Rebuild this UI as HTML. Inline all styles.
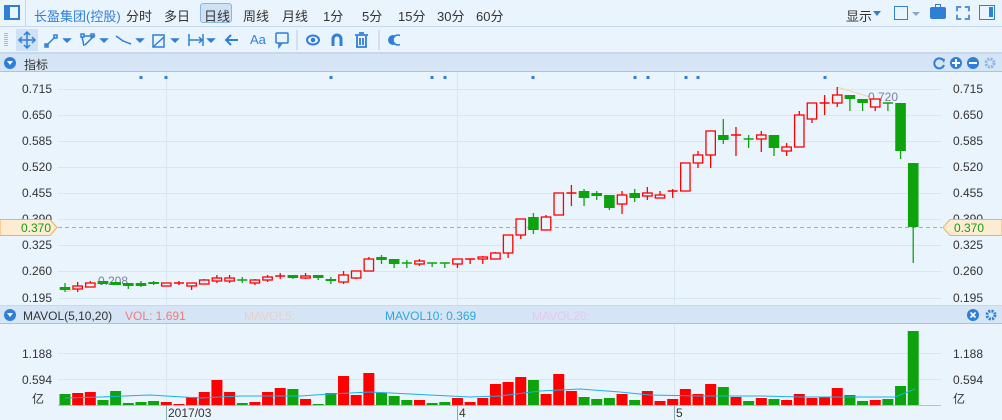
<!DOCTYPE html>
<html><head><meta charset="utf-8"><style>
*{margin:0;padding:0;box-sizing:border-box}
body{width:1002px;height:420px;overflow:hidden;background:#eaf4fd;font-family:"Liberation Sans","Noto Sans CJK SC",sans-serif;position:relative;color:#333}
.abs{position:absolute}
.top{left:0;top:0;width:1002px;height:27px;border-bottom:1px solid #c6d8ea}
.top span{position:absolute;top:6px;font-size:13px;color:#333}
.tb{left:0;top:27px;width:1002px;height:26px;border-bottom:1px solid #c6d8ea}
.hdr{left:0;width:1002px;height:19px;background:#d5e5f5;border-bottom:1px solid #a3c6e8;border-top:1px solid #c6d8ea;font-size:12px}
</style></head><body>
<div class="abs top">
 <div class="abs" style="left:4px;top:5px;width:16px;height:15px;border:2px solid #2f7fd6"><div style="width:4px;height:11px;background:#2f7fd6"></div></div>
 <div class="abs" style="left:25px;top:0;width:1px;height:27px;background:#c6d8ea"></div>
 <span style="left:34px;color:#2f7fd6">长盈集团(控股)</span>
 <span style="left:126px">分时</span><span style="left:164px">多日</span>
 <div class="abs" style="left:200px;top:3px;width:32px;height:20px;background:#cfe1f5;border:1px solid #8fb6e0;border-radius:3px"></div>
 <span style="left:204px">日线</span><span style="left:243px">周线</span><span style="left:282px">月线</span>
 <span style="left:323px">1分</span><span style="left:362px">5分</span><span style="left:398px">15分</span><span style="left:437px">30分</span><span style="left:476px">60分</span>
 <span style="left:846px">显示</span><div class="abs" style="left:873px;top:11px;border:4px solid transparent;border-top:5px solid #2f7fd6"></div>
 <div class="abs" style="left:894px;top:6px;width:14px;height:14px;border:1.5px solid #2f7fd6"></div><div class="abs" style="left:912px;top:12px;border:4px solid transparent;border-top:4px solid #8aa6c8"></div>
 <div class="abs" style="left:930px;top:7px;width:16px;height:12px;background:#2f7fd6;border-radius:2px"></div><div class="abs" style="left:935px;top:4px;width:6px;height:4px;border:1.5px solid #2f7fd6;border-bottom:none"></div>
 <div class="abs" style="left:956px;top:6px;width:14px;height:14px;border:2px dashed #2f7fd6;opacity:.8"></div>
 <div class="abs" style="left:979px;top:5px;width:16px;height:15px;border:1.5px solid #2f7fd6"><div style="position:absolute;right:1px;top:1px;width:4px;height:10px;background:#2f7fd6"></div></div>
</div>
<div class="abs tb">
 <svg width="400" height="26" style="position:absolute;left:0;top:0" fill="none" stroke="#2f7fd6" stroke-width="1.5">
  <rect x="16" y="2" width="22" height="22" fill="#cfe1f5" stroke="none"/>
  <path d="M6 6v14" stroke="#9bbce0" stroke-dasharray="1 1" stroke-width="4"/>
  <path d="M27 5v16M19 13h16M24 8l3-3 3 3M24 18l3 3 3-3M22 10l-3 3 3 3M32 10l3 3-3 3"/>
  <path d="M46 19l9-9"/><rect x="45" y="17" width="3" height="3"/><rect x="54" y="8" width="3" height="3"/><path d="M64 12h6l-3 3z" fill="#2f7fd6"/>
  <path d="M82 10l2 9M84 9h10l-9 9" /><rect x="81" y="7" width="3" height="3"/><rect x="91" y="7" width="3" height="3"/><path d="M101 12h6l-3 3z" fill="#2f7fd6"/>
  <path d="M116 9l7 5 8 3"/><path d="M137 12h6l-3 3z" fill="#2f7fd6"/>
  <rect x="153" y="8" width="11" height="12"/><path d="M153 20l11-10"/><path d="M172 12h6l-3 3z" fill="#2f7fd6"/>
  <path d="M189 7v12M203 7v12M189 13h13l-3-3M199 16l3-3"/><path d="M208 12h6l-3 3z" fill="#2f7fd6"/>
  <path d="M226 13h12M231 8l-5 5 5 5" stroke-width="2"/>
  <rect x="276" y="6" width="12" height="10" rx="1"/><path d="M279 16v4l3-4"/>
  <path d="M297 3v20" stroke="#b8cde3" stroke-width="1"/>
  <ellipse cx="313" cy="13" rx="6" ry="4.5" stroke-width="2"/><circle cx="313" cy="13" r="1.5" fill="#2f7fd6"/>
  <path d="M333 19v-7a4 4 0 0 1 8 0v7" stroke-width="3"/>
  <path d="M357 9v11h9V9M355 8h13M359 6h5M360 11v7M363 11v7" stroke-width="1.8"/>
  <path d="M379 3v20" stroke="#b8cde3" stroke-width="1"/>
  <circle cx="393" cy="13" r="5" fill="#2f7fd6" stroke="none"/><circle cx="398" cy="13" r="5" fill="#eaf4fd" stroke="#2f7fd6"/>
 </svg>
 <div class="abs" style="left:250px;top:5px;font-size:13px;color:#2f7fd6">Aa</div>
</div>
<div class="abs hdr" style="top:53px">
 <div class="abs" style="left:4px;top:3px;width:12px;height:12px;border-radius:50%;background:#2f7fd6"></div><div class="abs" style="left:7px;top:7px;border:3px solid transparent;border-top:4px solid #fff"></div>
 <span class="abs" style="left:24px;top:2px">指标</span>
 <svg class="abs" style="left:932px;top:2px" width="66" height="14"><path d="M11 4a5 5 0 1 0 1 5" fill="none" stroke="#2f7fd6" stroke-width="2"/><path d="M9 2l4 1-1 4z" fill="#2f7fd6"/><circle cx="24" cy="7" r="6" fill="#2f7fd6"/><path d="M20 7h8M24 3v8" stroke="#fff" stroke-width="2"/><circle cx="41" cy="7" r="6" fill="#2f7fd6"/><path d="M37 7h8" stroke="#fff" stroke-width="2"/><circle cx="58" cy="7" r="4" fill="none" stroke="#8cb5e6" stroke-width="3" stroke-dasharray="2 1.2"/></svg>
</div>
<div class="abs hdr" style="top:305px">
 <div class="abs" style="left:4px;top:3px;width:12px;height:12px;border-radius:50%;background:#2f7fd6"></div><div class="abs" style="left:7px;top:7px;border:3px solid transparent;border-top:4px solid #fff"></div>
 <span class="abs" style="left:23px;top:3px">MAVOL(5,10,20)</span>
 <span class="abs" style="left:125px;top:3px;color:#f07a7a">VOL: 1.691</span>
 <span class="abs" style="left:244px;top:3px;color:#e8d0c8">MAVOL5:</span>
 <span class="abs" style="left:385px;top:3px;color:#2aa8e0">MAVOL10: 0.369</span>
 <span class="abs" style="left:532px;top:3px;color:#e6c8ee">MAVOL20:</span>
 <svg class="abs" style="left:966px;top:2px" width="34" height="14"><circle cx="7" cy="7" r="6" fill="#2f7fd6"/><path d="M4.5 4.5l5 5M9.5 4.5l-5 5" stroke="#fff" stroke-width="1.6"/><circle cx="25" cy="7" r="4" fill="none" stroke="#2f7fd6" stroke-width="3" stroke-dasharray="2 1.2"/></svg>
</div>
<svg id="ch" class="abs" style="left:0;top:0" width="1002" height="420" font-family="Liberation Sans, sans-serif" font-size="12"></svg>
<script>
var s='';
var gl=[[0.715,89],[0.650,115],[0.585,141],[0.520,167],[0.455,193],[0.390,219],[0.325,245],[0.260,271],[0.195,298]];
gl.forEach(function(g){s+='<line x1="58" x2="941" y1="'+(g[1]+0.5)+'" y2="'+(g[1]+0.5)+'" stroke="#d6e6f3"/>';
 s+='<text x="22" y="'+(g[1]+4)+'" fill="#333">'+g[0].toFixed(3)+'</text><text x="953" y="'+(g[1]+4)+'" fill="#333">'+g[0].toFixed(3)+'</text>';});
[166,457,674].forEach(function(x){s+='<line x1="'+(x+.5)+'" x2="'+(x+.5)+'" y1="72" y2="305" stroke="#d6e6f3"/><line x1="'+(x+.5)+'" x2="'+(x+.5)+'" y1="324" y2="420" stroke="#d6e6f3"/>';});
[141,166,331,432,445,533,635,648,686,698,825].forEach(function(x){s+='<rect x="'+(x-1.5)+'" y="76" width="3" height="3" fill="#2f7fd6"/>';});
var C=[[287,290,283,292,'g'],[286,289,282,292,'r'],[283,287,281,287,'r'],[281,284,281,284,'g'],[282,285,282,285,'g'],[283,286,283,289,'g'],[283,286,281,287,'g'],[282,284,281,285,'g'],[283,286,283,286,'r'],[283,283,281,285,'r'],[283,286,283,290,'r'],[280,284,279,284,'r'],[278,281,275,283,'r'],[278,281,275,283,'r'],[280,280,277,283,'g'],[280,283,279,285,'r'],[277,280,275,282,'r'],[276,276,273,279,'r'],[275,278,275,279,'g'],[276,278,273,279,'r'],[275,278,275,280,'g'],[279,281,277,284,'g'],[275,282,271,284,'r'],[271,278,271,279,'r'],[259,271,257,271,'r'],[257,260,255,264,'g'],[259,264,259,268,'g'],[263,263,260,268,'g'],[261,264,259,266,'r'],[263,263,263,267,'g'],[263,263,263,268,'g'],[259,264,259,268,'r'],[259,259,259,264,'r'],[257,259,256,264,'r'],[253,259,252,259,'r'],[235,253,235,258,'r'],[219,235,219,239,'r'],[217,230,213,234,'g'],[217,230,215,230,'r'],[193,215,193,215,'r'],[193,193,185,206,'r'],[191,198,189,206,'g'],[193,196,191,200,'g'],[195,208,195,210,'g'],[195,204,191,214,'r'],[193,198,189,202,'g'],[193,196,187,200,'r'],[195,198,191,198,'r'],[191,191,189,198,'r'],[163,191,163,191,'r'],[155,163,151,168,'r'],[131,155,131,168,'r'],[135,140,119,144,'g'],[135,135,127,156,'r'],[139,139,135,148,'g'],[135,139,131,152,'r'],[135,148,135,156,'g'],[147,151,143,156,'r'],[115,147,111,147,'r'],[103,119,103,123,'r'],[103,103,95,115,'r'],[95,103,87,107,'r'],[95,99,95,111,'g'],[99,103,99,111,'g'],[99,107,99,111,'r'],[103,103,103,111,'g'],[103,151,103,159,'g'],[163,227,163,263,'g']];
var V=[[394,'g'],[393,'r'],[392,'r'],[400,'g'],[391,'g'],[403,'g'],[402,'g'],[401,'g'],[402,'r'],[404,'r'],[397,'r'],[392,'r'],[380,'r'],[392,'r'],[403,'g'],[402,'r'],[392,'r'],[388,'r'],[389,'g'],[399,'r'],[404,'g'],[393,'g'],[376,'r'],[395,'r'],[373,'r'],[393,'g'],[396,'g'],[400,'g'],[400,'r'],[403,'g'],[402,'g'],[398,'r'],[402,'r'],[398,'r'],[384,'r'],[382,'r'],[377,'r'],[380,'g'],[394,'r'],[374,'r'],[391,'r'],[397,'g'],[399,'g'],[398,'g'],[394,'r'],[400,'g'],[391,'r'],[401,'r'],[399,'r'],[389,'r'],[394,'r'],[384,'r'],[387,'g'],[397,'r'],[401,'g'],[398,'r'],[399,'g'],[400,'r'],[394,'r'],[398,'r'],[397,'r'],[388,'r'],[395,'g'],[401,'g'],[400,'r'],[399,'g'],[386,'g'],[331,'g']];
function X(i){return 65+12.66*i;}
// volume grid
s+='<line x1="58" x2="941" y1="353.5" y2="353.5" stroke="#d6e6f3"/><line x1="58" x2="941" y1="379.5" y2="379.5" stroke="#d6e6f3"/><line x1="58" x2="941" y1="405.5" y2="405.5" stroke="#a9c4e0"/>';
s+='<text x="22" y="358" fill="#333">1.188</text><text x="22" y="384" fill="#333">0.594</text><text x="32" y="403" fill="#333">亿</text>';
s+='<text x="953" y="358" fill="#333">1.188</text><text x="953" y="384" fill="#333">0.594</text><text x="953" y="403" fill="#333">亿</text>';
s+='<line x1="166.5" x2="166.5" y1="405" y2="420" stroke="#8aa"/><line x1="457.5" x2="457.5" y1="405" y2="420" stroke="#8aa"/><line x1="674.5" x2="674.5" y1="405" y2="420" stroke="#8aa"/>';
s+='<text x="168" y="417" fill="#333">2017/03</text><text x="459" y="417" fill="#333">4</text><text x="676" y="417" fill="#333">5</text>';
V.forEach(function(v,i){var x=X(i);s+='<rect x="'+(x-5.5)+'" y="'+v[0]+'" width="11" height="'+(405-v[0])+'" fill="'+(v[1]=='r'?'#f00':'#0da30d')+'"/>';});
var ma=[[65,398],[100,397],[150,395],[166,396],[200,398],[240,396],[300,396],[330,394],[370,392],[430,395],[470,397],[500,396],[540,391],[580,389],[620,392],[650,395],[700,396],[760,396],[800,397],[860,397],[895,397],[905,393],[915,389]];
s+='<polyline fill="none" stroke="#1ab0e8" stroke-width="1" points="'+ma.map(function(p){return p.join(',')}).join(' ')+'"/>';
// dashed line
s+='<line x1="58" x2="942" y1="227.5" y2="227.5" stroke="#e0a050" stroke-dasharray="4 3"/>';
// annotations
s+='<line x1="65" y1="292" x2="100" y2="283" stroke="#f3d3a8"/><text x="98" y="285" fill="#7a7f9a">0.208</text>';
s+='<line x1="837" y1="87" x2="870" y2="97" stroke="#f3d3a8"/><text x="868" y="101" fill="#7a7f9a">0.720</text>';
C.forEach(function(c,i){var x=X(i),col=c[4]=='r'?'#f00':'#0da30d';
 s+='<line x1="'+x+'" x2="'+x+'" y1="'+c[2]+'" y2="'+c[3]+'" stroke="'+col+'" stroke-width="1.3"/>';
 if(c[1]-c[0]<1){s+='<line x1="'+(x-5)+'" x2="'+(x+5)+'" y1="'+c[0]+'" y2="'+c[0]+'" stroke="'+col+'" stroke-width="1.5"/>';}
 else if(c[4]=='r'){s+='<rect x="'+(x-4.7)+'" y="'+c[0]+'" width="9.4" height="'+(c[1]-c[0])+'" fill="#eaf4fd" stroke="#f00" stroke-width="1.3"/>';}
 else{s+='<rect x="'+(x-5.3)+'" y="'+c[0]+'" width="10.6" height="'+(c[1]-c[0])+'" fill="'+col+'"/>';}
});
// markers
s+='<path d="M0 219.5H50L57 227.5L50 235.5H0Z" fill="#fdebd2" stroke="#f0b060"/><text x="21" y="232" fill="#14a014">0.370</text>';
s+='<path d="M1002 219.5H950L943 227.5L950 235.5H1002Z" fill="#fdebd2" stroke="#f0b060"/><text x="954" y="232" fill="#14a014">0.370</text>';
document.getElementById('ch').innerHTML=s;
</script>
</body></html>
